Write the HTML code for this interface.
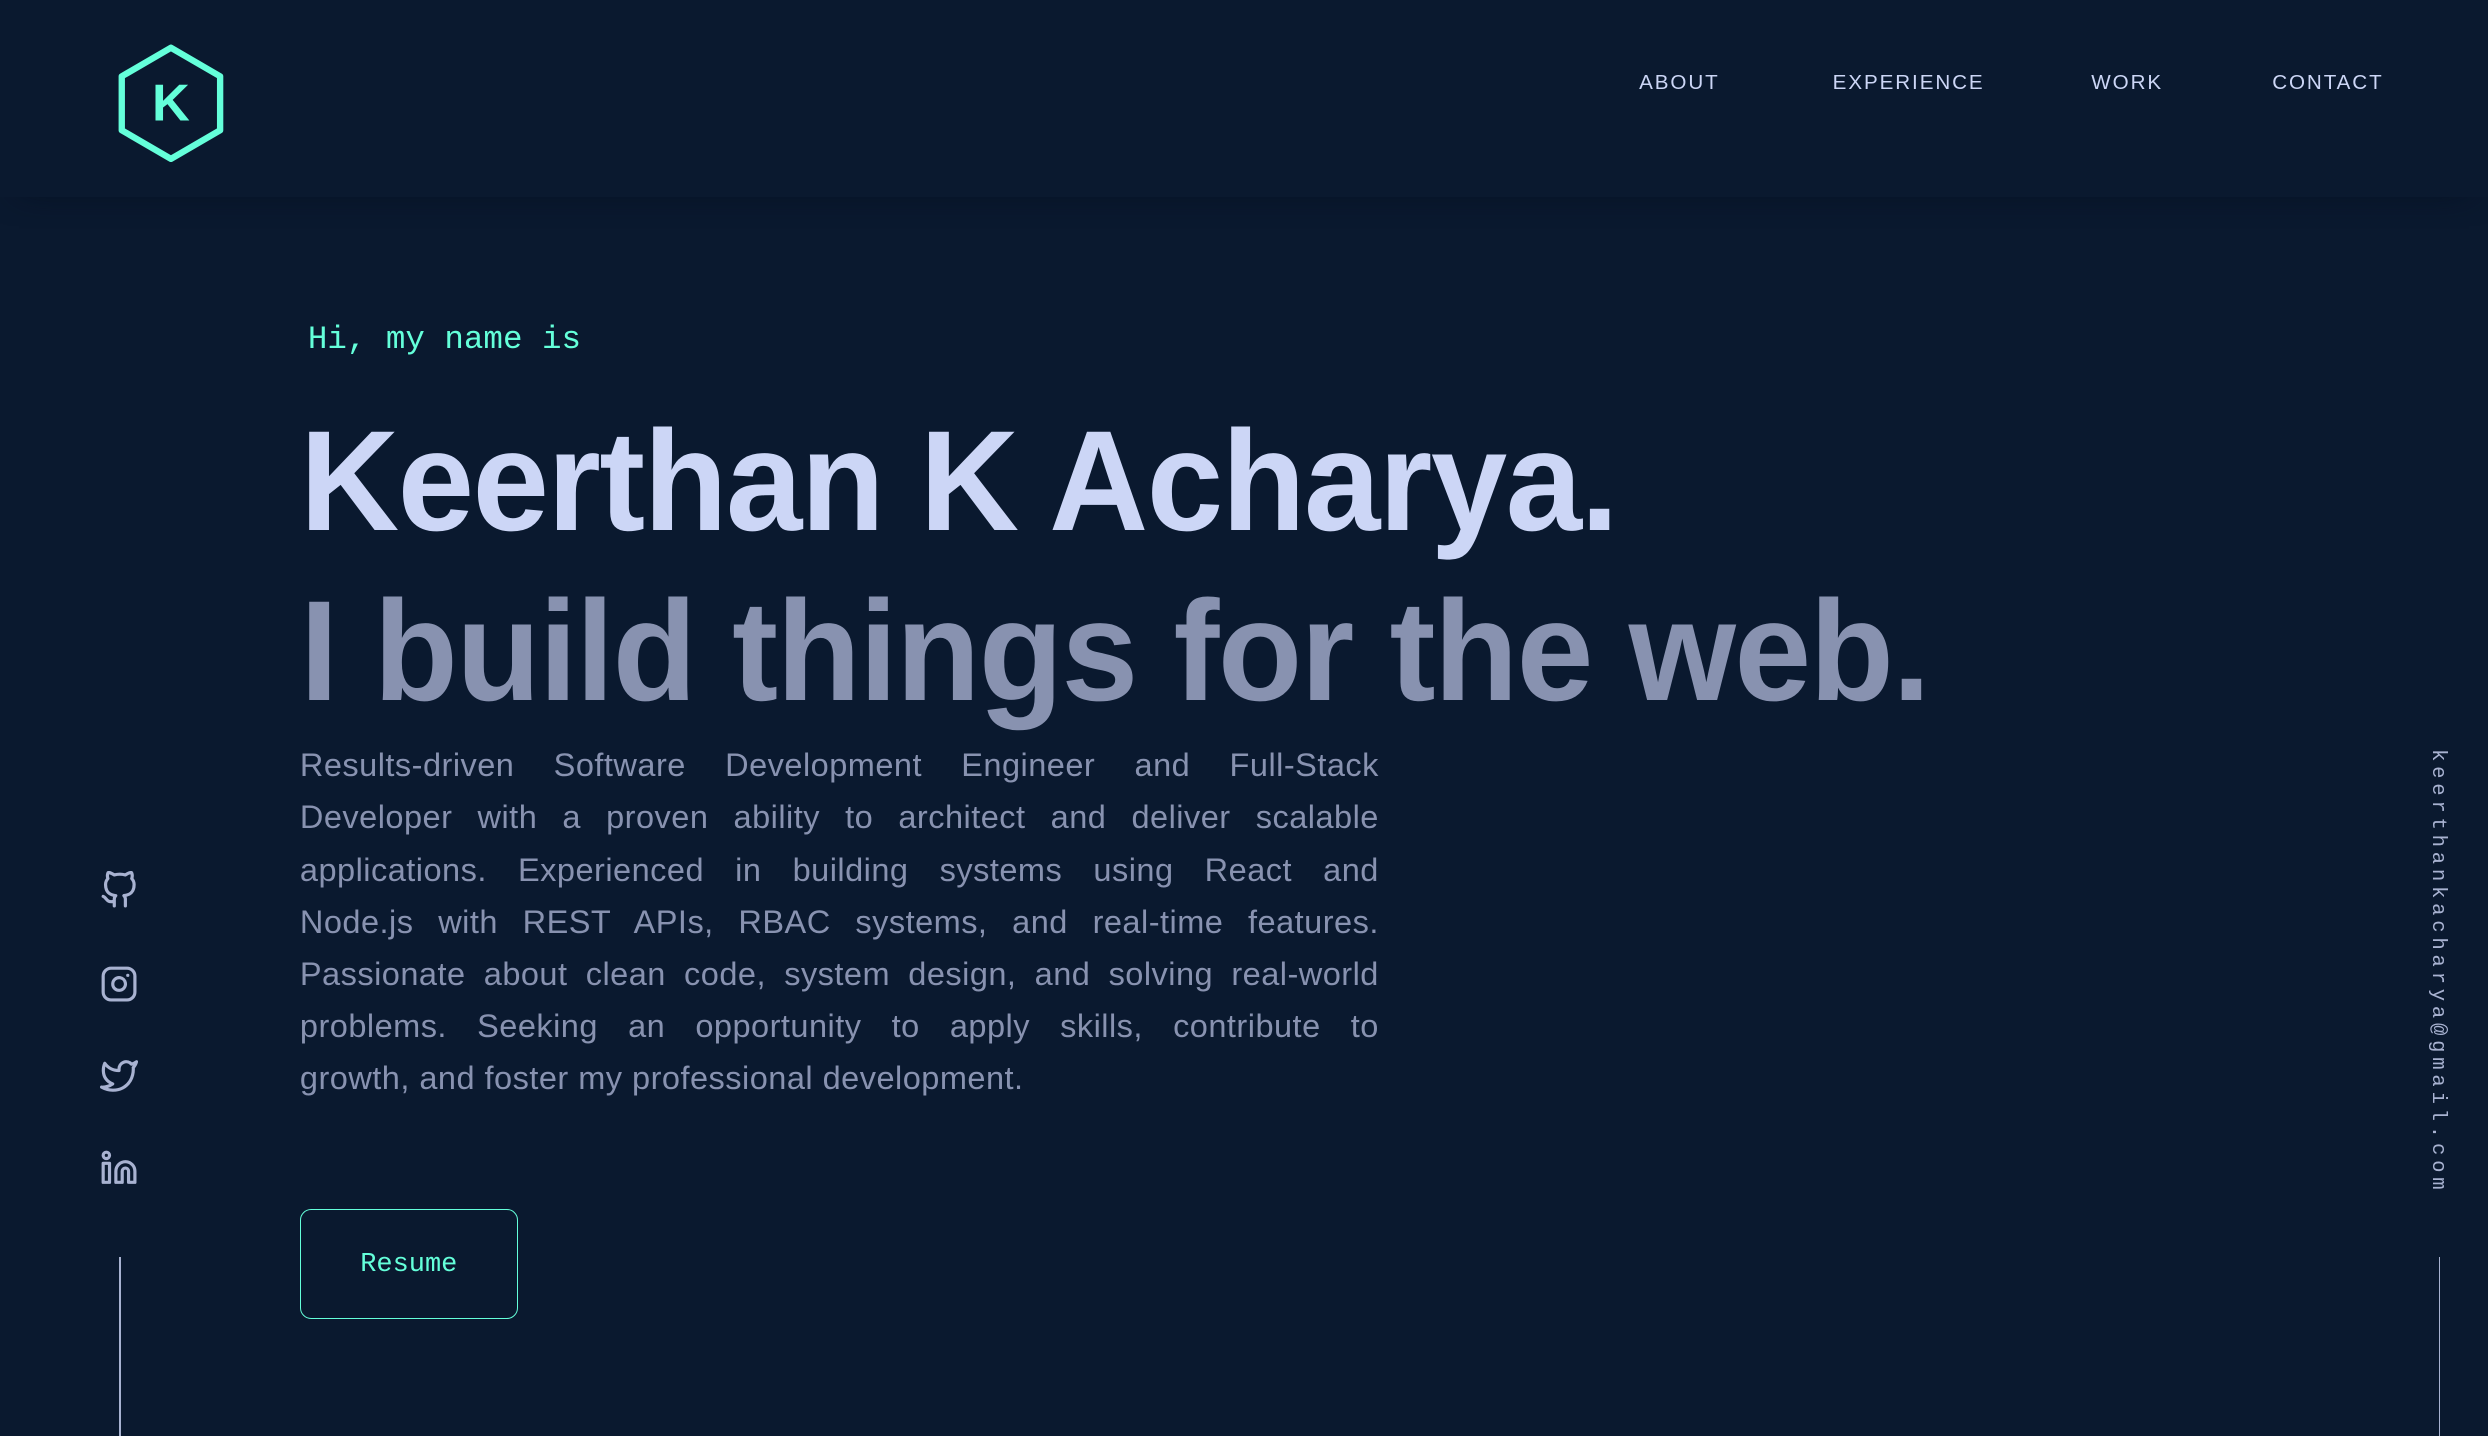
<!DOCTYPE html>
<html><head><meta charset="utf-8"><style>
html,body{margin:0;padding:0;background:#0a192f;overflow:hidden}
body{width:2488px;height:1436px}
#w{zoom:1.58673;width:1568px;height:905px;position:relative;font-family:"Liberation Sans",sans-serif}
.hdr{position:absolute;left:0;top:0;width:1568px;height:124px;box-shadow:0 8px 20px -12px rgba(2,12,27,.7)}
.nav{position:absolute;top:45px;font-size:13px;letter-spacing:1.2px;color:#ccd6f6}
.mono{font-family:"Liberation Mono",monospace}
.a{position:absolute;white-space:nowrap}
.p div{text-align:justify;text-align-last:justify;white-space:nowrap}
.p div.l{text-align-last:left}
svg.i{position:absolute;width:24px;height:24px;fill:none;stroke:#a8b2d1;stroke-width:2;stroke-linecap:round;stroke-linejoin:round}
</style></head><body><div id="w">
<div class="hdr"></div>
<svg class="a" style="left:74px;top:27px" width="68" height="76" viewBox="0 0 68 76">
<polygon points="34,3 65,21 65,55 34,73 3,55 3,21" fill="none" stroke="#64ffda" stroke-width="4" stroke-linejoin="round"/>
<text x="34" y="49" text-anchor="middle" fill="#64ffda" font-family="Liberation Sans" font-weight="bold" font-size="33">K</text></svg>
<div class="nav a" style="left:1033px">ABOUT</div>
<div class="nav a" style="left:1155px">EXPERIENCE</div>
<div class="nav a" style="left:1318px">WORK</div>
<div class="nav a" style="left:1432px">CONTACT</div>

<div class="a mono" style="left:194px;top:202px;font-size:20.5px;color:#64ffda">Hi, my name is</div>
<div class="a" style="left:189px;top:252px;font-size:90px;font-weight:bold;color:#ccd6f6;letter-spacing:-1px;transform:scaleX(0.962);transform-origin:left">Keerthan K Acharya.</div>
<div class="a" style="left:189px;top:359px;font-size:90px;font-weight:bold;color:#8892b0;letter-spacing:-1px;transform:scaleX(0.966);transform-origin:left">I build things for the web.</div>
<div class="a p" style="left:189px;top:466px;width:680px;font-size:20.5px;letter-spacing:0.3px;line-height:32.8px;color:#8892b0">
<div>Results-driven Software Development Engineer and Full-Stack</div>
<div>Developer with a proven ability to architect and deliver scalable</div>
<div>applications. Experienced in building systems using React and</div>
<div>Node.js with REST APIs, RBAC systems, and real-time features.</div>
<div>Passionate about clean code, system design, and solving real-world</div>
<div>problems. Seeking an opportunity to apply skills, contribute to</div>
<div class="l">growth, and foster my professional development.</div>
</div>
<div class="a mono" style="left:189px;top:762px;width:136px;height:68px;border:1px solid #64ffda;border-radius:7px;color:#64ffda;font-size:17px;line-height:70px;text-align:center">Resume</div>

<svg class="i" style="left:63px;top:549px" viewBox="0 0 24 24"><path d="M9 19c-5 1.5-5-2.5-7-3m14 6v-3.87a3.37 3.37 0 0 0-.94-2.61c3.140-.35 6.44-1.54 6.44-7A5.44 5.44 0 0 0 20 4.77 5.07 5.07 0 0 0 19.91 1S18.73.65 16 2.48a13.38 13.38 0 0 0-7 0C6.27.65 5.09 1 5.09 1A5.070 5.07 0 0 0 5 4.77a5.44 5.44 0 0 0-1.5 3.78c0 5.42 3.3 6.61 6.44 7A3.37 3.37 0 0 0 9 18.13V22"/></svg>
<svg class="i" style="left:63px;top:608px" viewBox="0 0 24 24"><rect x="2" y="2" width="20" height="20" rx="5"/><path d="M16 11.37A4 4 0 1 1 12.63 8 4 4 0 0 1 16 11.37z"/><line x1="17.5" y1="6.5" x2="17.51" y2="6.5"/></svg>
<svg class="i" style="left:63px;top:666px" viewBox="0 0 24 24"><path d="M23 3a10.9 10.9 0 0 1-3.14 1.53 4.48 4.48 0 0 0-7.86 3v1A10.66 10.66 0 0 1 3 4s-4 9 5 13a11.64 11.64 0 0 1-7 2c9 5 20 0 20-11.5a4.5 4.5 0 0 0-.08-.83A7.72 7.72 0 0 0 23 3z"/></svg>
<svg class="i" style="left:63px;top:724px" viewBox="0 0 24 24"><path d="M16 8a6 6 0 0 1 6 6v7h-4v-7a2 2 0 0 0-4 0v7h-4v-7a6 6 0 0 1 6-6z"/><rect x="2" y="9" width="4" height="12"/><circle cx="4" cy="4" r="2"/></svg>
<div class="a" style="left:75px;top:792px;width:1px;height:120px;background:#a8b2d1"></div>

<div class="a mono" style="left:1529px;top:472px;writing-mode:vertical-rl;font-size:13px;letter-spacing:3px;color:#a8b2d1">keerthankacharya@gmail.com</div>
<div class="a" style="left:1537px;top:792px;width:1px;height:120px;background:#a8b2d1"></div>
</div></body></html>
